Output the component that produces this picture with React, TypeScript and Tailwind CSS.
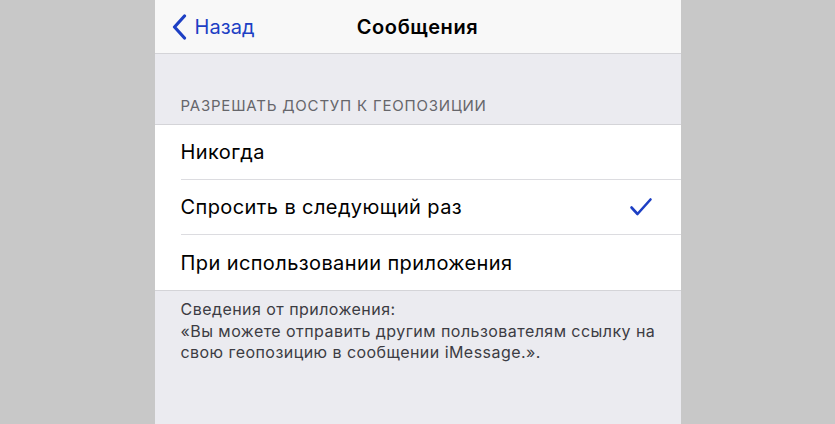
import React from "react";

const options = [
  { label: "Никогда", checked: false },
  { label: "Спросить в следующий раз", checked: true },
  { label: "При использовании приложения", checked: false },
];

export default function App() {
  return (
    <div
      className="w-[835px] h-[424px] bg-[#c8c8c8] overflow-hidden"
      style={{ fontFamily: '"Inter", "Noto Sans", sans-serif' }}
    >
      <div className="mx-auto w-[526px] h-full bg-[#ebebf0] flex flex-col">
        {/* ── Nav bar ─────────────────────────────── */}
        <div className="relative h-[54px] shrink-0 bg-[#f8f8f8] border-b border-[#d4d4d8] flex items-center">
          <div className="flex items-center gap-[8px] pl-[17px] text-[#1d3fc4]">
            <svg width="15" height="26" viewBox="0 0 15 26" fill="none">
              <path d="M12.5 2 L2.5 13 L12.5 24" stroke="currentColor" strokeWidth="3.2" strokeLinecap="round" strokeLinejoin="round" />
            </svg>
            <span className="text-[20px] leading-none tracking-[0.1px]">Назад</span>
          </div>
          <div className="absolute inset-0 flex items-center justify-center pointer-events-none">
            <span className="text-[20px] font-semibold leading-none text-black tracking-[0.6px]">Сообщения</span>
          </div>
        </div>

        {/* ── Section header ──────────────────────── */}
        <div className="h-[70px] shrink-0 flex items-end pl-[26px] pb-[11px]">
          <span className="text-[15px] leading-none uppercase text-[#66666b] tracking-[0.8px]">
            Разрешать доступ к геопозиции
          </span>
        </div>

        {/* ── Options ─────────────────────────────── */}
        <div className="bg-white border-t border-b border-[#d4d4d8] shrink-0">
          {options.map((o, i) => (
            <div key={o.label} className="pl-[26px]">
              <div
                className={
                  "h-[55px] flex items-center justify-between pr-[28px] " +
                  (i < options.length - 1 ? "border-b border-[#dcdce0]" : "")
                }
              >
                <span className="text-[20px] leading-none text-black tracking-[0.4px]">{o.label}</span>
                {o.checked && (
                  <svg width="24" height="20" viewBox="0 0 24 20" fill="none" className="text-[#1d3fc4]">
                    <path d="M2.5 10.5 L8.5 17 L21.5 2.5" stroke="currentColor" strokeWidth="2.6" strokeLinecap="round" strokeLinejoin="round" />
                  </svg>
                )}
              </div>
            </div>
          ))}
        </div>

        {/* ── Footer ──────────────────────────────── */}
        <div className="pl-[26px] pr-[20px] pt-[8px] text-[16px] leading-[21.5px] text-[#3c3c43] tracking-[0.45px]">
          <div>Сведения от приложения:</div>
          <div>«Вы можете отправить другим пользователям ссылку на свою геопозицию в сообщении iMessage.».</div>
        </div>
      </div>
    </div>
  );
}
